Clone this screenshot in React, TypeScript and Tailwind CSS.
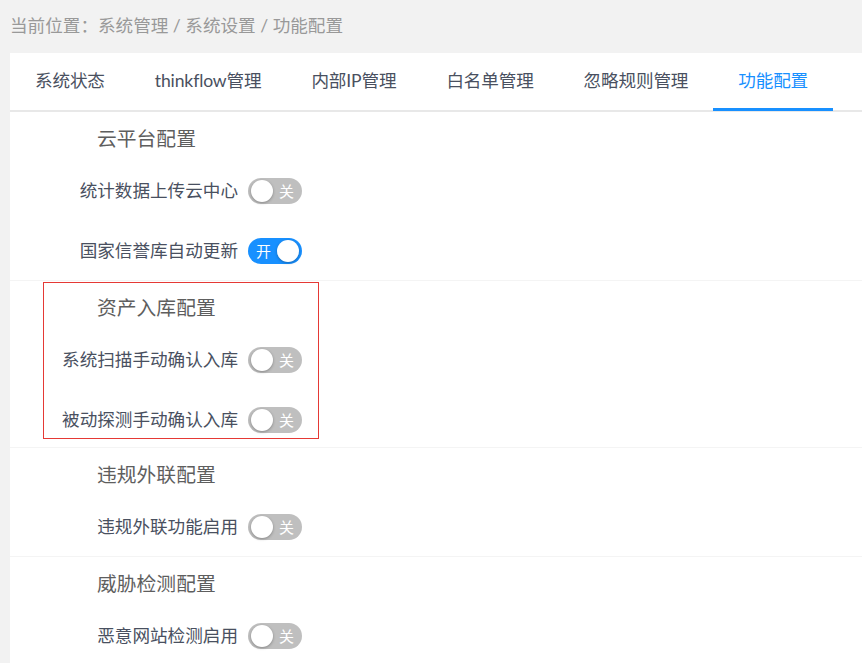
const tabs = ["系统状态", "thinkflow管理", "内部IP管理", "白名单管理", "忽略规则管理", "功能配置"];

type Item = { label: string; on: boolean };
type Section = { title: string; items: Item[]; marked?: boolean };

const sections: Section[] = [
  {
    title: "云平台配置",
    items: [
      { label: "统计数据上传云中心", on: false },
      { label: "国家信誉库自动更新", on: true },
    ],
  },
  {
    title: "资产入库配置",
    marked: true,
    items: [
      { label: "系统扫描手动确认入库", on: false },
      { label: "被动探测手动确认入库", on: false },
    ],
  },
  {
    title: "违规外联配置",
    items: [{ label: "违规外联功能启用", on: false }],
  },
  {
    title: "威胁检测配置",
    items: [{ label: "恶意网站检测启用", on: false }],
  },
];

function Switch({ on }: { on: boolean }) {
  return (
    <span
      className={
        "flex h-[26px] w-[54px] shrink-0 items-center gap-[5px] rounded-full px-[2px] " +
        (on ? "flex-row bg-[#1890ff] pl-[8px]" : "flex-row-reverse bg-[#bfbfbf] pr-[8px]")
      }
    >
      <span className="text-[15px] leading-none text-white">{on ? "开" : "关"}</span>
      <span className="ml-auto mr-auto h-[22px] w-[22px] rounded-full bg-white shadow-[0_1px_3px_rgba(0,0,0,0.3)]" />
    </span>
  );
}

export default function App() {
  return (
    <div
      className="min-h-screen bg-[#f2f2f2] text-[17.6px]"
      style={{ fontFamily: 'Lato, "Noto Sans CJK SC", sans-serif' }}
    >
      <div className="flex h-[53px] items-center pl-[10px] text-[#999999]">
        当前位置：系统管理 / 系统设置 / 功能配置
      </div>

      <div className="ml-[10px] bg-white">
        <div className="flex h-[59px] border-b-2 border-[#e8e8e8]">
          {tabs.map((t, i) => (
            <div
              key={t}
              className={
                "relative flex items-center px-[25px] tracking-[-0.15px] " +
                (i === tabs.length - 1 ? "text-[#1890ff]" : "text-[#495060]")
              }
            >
              {t}
              {i === tabs.length - 1 && (
                <span className="absolute -bottom-[1px] left-0 right-0 h-[3px] bg-[#1890ff]" />
              )}
            </div>
          ))}
        </div>

        {sections.map((s, si) => (
          <div key={s.title} className={"relative pt-[1px] " + (si > 0 ? "border-t border-[#f4f4f4]" : "")}>
            <div className="flex h-[52px] items-center pl-[87px] text-[19.8px] text-[#5e5e5e]">{s.title}</div>
            <div className={"flex flex-col gap-[30px] pt-[11px] " + (s.marked ? "pb-[12px]" : "pb-[14px]")}>
              {s.items.map((it) => (
                <div key={it.label} className="flex h-[30px] items-center gap-[10px]">
                  <div className="w-[228px] whitespace-nowrap text-right text-[#495060]">{it.label}</div>
                  <Switch on={it.on} />
                </div>
              ))}
            </div>
            {s.marked && (
              <div className="pointer-events-none absolute left-[33px] top-[1px] h-[157px] w-[276px] border border-[#e53935]" />
            )}
          </div>
        ))}
      </div>
    </div>
  );
}
